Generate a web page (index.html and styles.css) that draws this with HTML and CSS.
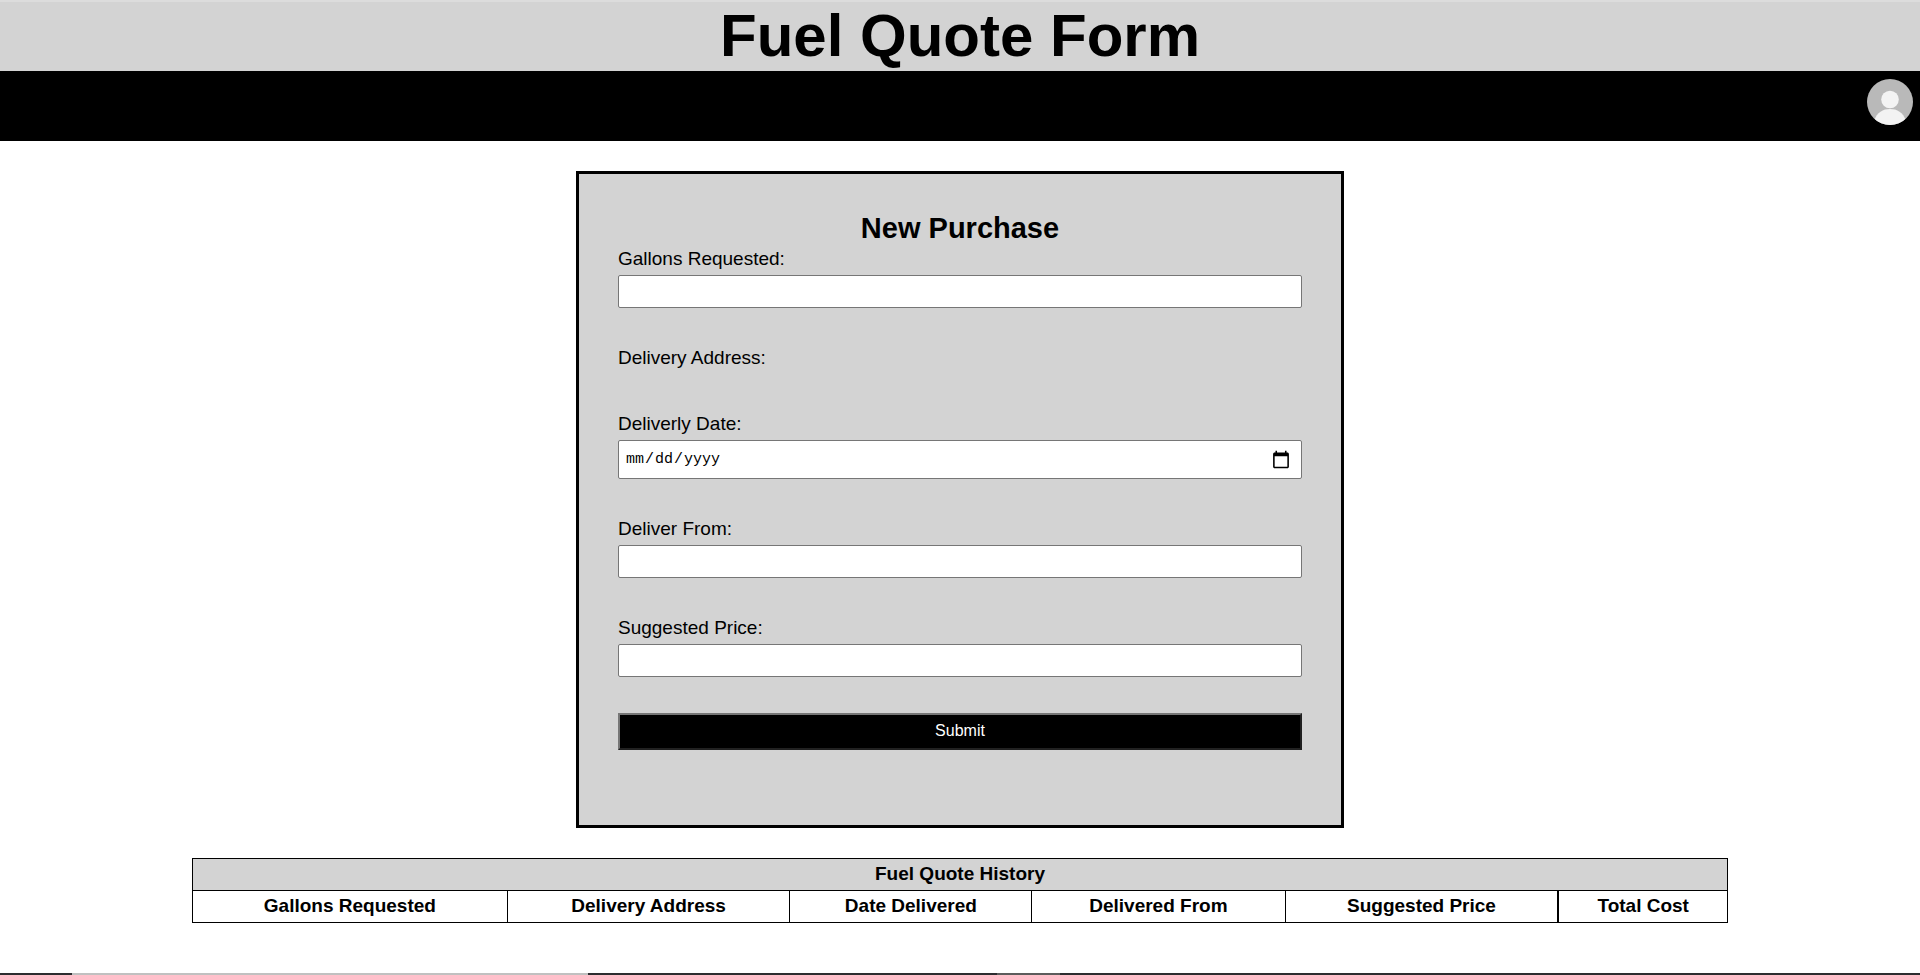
FILE: index.html
```
<!DOCTYPE html>
<html lang="en-US">
<head>
<meta charset="utf-8">
<title>Fuel Quote Form</title>
<link rel="stylesheet" href="styles.css">
</head>
<body>
<header class="banner"><h1 class="banner-title">Fuel Quote Form</h1></header>
<nav class="navbar">
  <a class="profile" href="#" aria-label="Profile">
    <svg class="avatar" viewBox="0 0 46 46" aria-hidden="true">
      <defs><clipPath id="disc"><circle cx="23" cy="23" r="23"/></clipPath></defs>
      <g clip-path="url(#disc)">
        <rect width="46" height="46" fill="#b9b9b9"/>
        <circle cx="23" cy="20.5" r="8.8" fill="#f3f3f3"/>
        <path d="M7 42C10 33 16 30 23 30S36 33 39 42V46H7Z" fill="#f3f3f3"/>
      </g>
    </svg>
  </a>
</nav>
<main class="content">
  <form class="quote-form">
    <h2 class="form-title">New Purchase</h2>
    <div class="field">
      <label class="label" for="gallons">Gallons Requested:</label>
      <input class="input" id="gallons" type="text">
    </div>
    <div class="field">
      <label class="label" for="address">Delivery Address:</label>
      <output id="address"></output>
    </div>
    <div class="field">
      <label class="label" for="date">Deliverly Date:</label>
      <input class="input input-date" id="date" type="date">
    </div>
    <div class="field">
      <label class="label" for="from">Deliver From:</label>
      <input class="input" id="from" type="text">
    </div>
    <div class="field">
      <label class="label" for="price">Suggested Price:</label>
      <input class="input" id="price" type="text">
    </div>
    <button class="submit" type="button">Submit</button>
  </form>
  <table class="history">
    <thead>
      <tr><th class="history-title" colspan="6">Fuel Quote History</th></tr>
      <tr>
        <th>Gallons Requested</th>
        <th>Delivery Address</th>
        <th>Date Delivered</th>
        <th>Delivered From</th>
        <th>Suggested Price</th>
        <th>Total Cost</th>
      </tr>
    </thead>
  </table>
</main>
<footer class="strip">
  <span class="strip-start"></span><span class="strip-light"></span><span class="strip-dark"></span><span class="strip-mid"></span><span class="strip-end"></span>
</footer>
</body>
</html>
```
FILE: styles.css
```
* { box-sizing: border-box; }

body {
  margin: 0;
  min-height: 100vh;
  display: flex;
  flex-direction: column;
  background: #fff;
  color: #000;
  font-family: "Liberation Sans", Arial, sans-serif;
  font-size: 19px;
  line-height: 22px;
}

.banner {
  padding-bottom: 2px;
  background: #d3d3d3;
  border-top: 2px solid #dcdcdc;
  text-align: center;
}

.banner-title {
  margin: 0;
  font-size: 60px;
  line-height: 67px;
}

.navbar {
  display: flex;
  justify-content: flex-end;
  padding: 8px 7px 16px;
  background: #000;
}

.profile, .avatar {
  display: block;
  width: 46px;
  height: 46px;
}

.content { flex: 1; }

.quote-form {
  width: 40%;
  margin: 30px auto;
  padding: 38px 39px 75px;
  border: 3px solid #000;
  background: #d3d3d3;
}

.form-title {
  margin: 0 0 3px;
  font-size: 29px;
  line-height: 33px;
  text-align: center;
}

.field {
  display: flex;
  flex-direction: column;
  gap: 5px;
  margin-bottom: 39px;
}

.field:last-of-type { margin-bottom: 36px; }

.input {
  width: 100%;
  height: 33px;
  margin: 0;
  padding: 0 7px;
  border: 1px solid #767676;
  border-radius: 2px;
  background: #fff;
  font: 16px "Liberation Sans", Arial, sans-serif;
}

.input-date {
  height: 39px;
  padding: 0 10px 0 6px;
  font: 15px "Liberation Mono", monospace;
}

.input-date::-webkit-calendar-picker-indicator {
  width: 20px;
  height: 20px;
  padding: 0;
}

.submit {
  display: block;
  width: 100%;
  height: 37px;
  padding: 0 0 2px;
  border: 2px solid;
  border-color: #767676 #212121 #212121 #767676;
  background: #000;
  color: #fff;
  font: 16px "Liberation Sans", Arial, sans-serif;
}

.history {
  width: 80%;
  margin: 0 auto;
  border-collapse: collapse;
}

.history th {
  padding: 4px 0 5px;
  border: 1px solid #000;
}

.history .history-title { background: #d3d3d3; }

.history th:last-child:not(.history-title) { border-left-width: 2px; }

.strip {
  display: grid;
  grid-template-columns: 72fr 516fr 409fr 63fr 860fr;
  height: 2px;
  background: #2d2d30;
}

.strip-light { background: #c0c0c0; }
.strip-mid { background: #5c5c5c; }
```
